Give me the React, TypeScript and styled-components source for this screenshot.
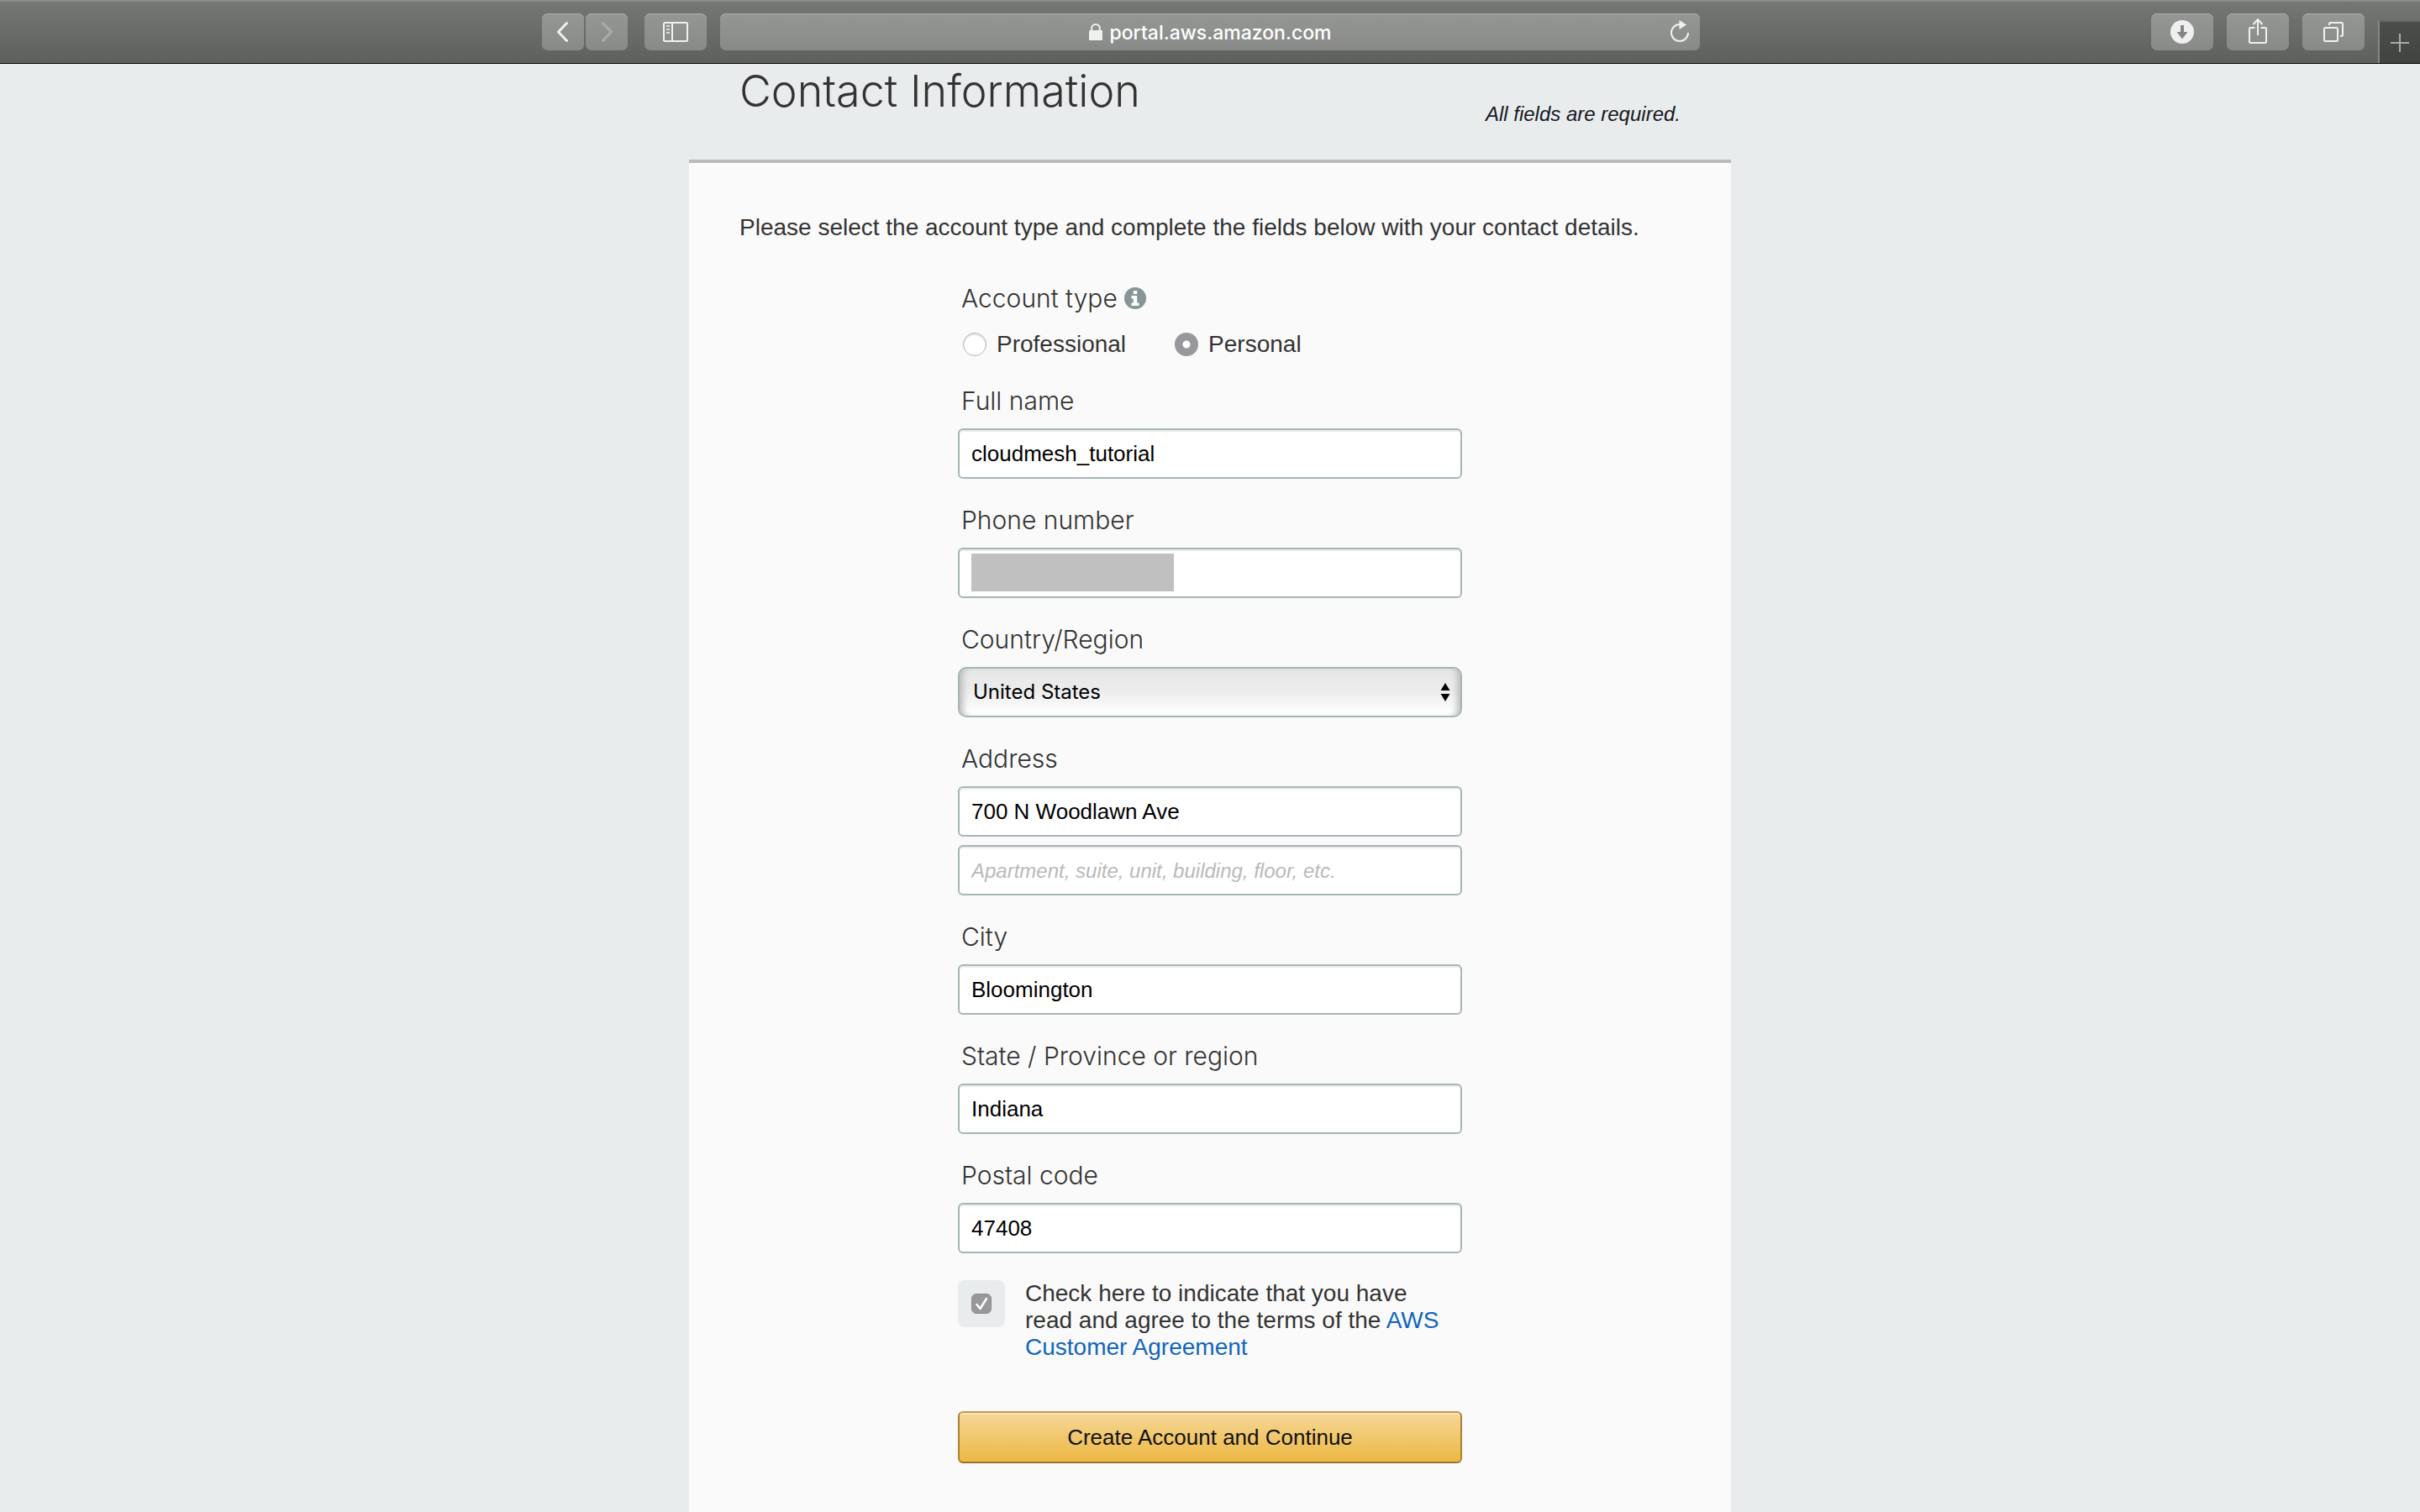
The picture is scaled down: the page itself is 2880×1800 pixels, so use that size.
import React, { useState } from 'react';
import styled, { createGlobalStyle } from 'styled-components';

const sans = `"Helvetica Neue", "Liberation Sans", Arial, sans-serif`;
const ui = `Inter, "Liberation Sans", sans-serif`;

const GlobalStyle = createGlobalStyle`
  *, *::before, *::after { box-sizing: border-box; }
  body { margin: 0; background: #e9eced; font-family: ${sans}; color: #333; }
  h1, p, fieldset { margin: 0; padding: 0; border: 0; font-weight: 400; }
  button, input, select { font: inherit; }
  svg { display: block; flex: none; }
`;

const Window = styled.div`
  min-height: 100vh;
  display: flex;
  flex-direction: column;
`;

const Toolbar = styled.header`
  height: 76px;
  display: grid;
  grid-template-columns: 1fr minmax(0, 1166px) 1fr;
  column-gap: 16px;
  background: linear-gradient(#757775, #5e605e);
  border-top: 2px solid #8b8d8b;
  border-bottom: 1px solid #000;
`;

const ToolGroup = styled.div<{ $gap: number; $start?: boolean }>`
  display: flex;
  gap: ${(p) => p.$gap}px;
  padding-top: ${(p) => (p.$start ? 14 : 0)}px;
  justify-content: flex-end;
`;

const ToolButton = styled.button<{ $wide?: boolean }>`
  width: ${(p) => (p.$wide ? 74 : 50)}px;
  height: 44px;
  padding: 0;
  display: flex;
  align-items: center;
  justify-content: center;
  border: 0;
  border-radius: 7px;
  background: linear-gradient(#959795, #888a88);
  box-shadow: inset 0 1px 0 #abadab;
  color: #f0f1f0;

  &:disabled { color: #abadab; }
`;

const NavPair = styled.div`
  display: flex;
  gap: 2px;
`;

const AddressBar = styled.div`
  height: 44px;
  margin-top: 14px;
  padding: 0 12px;
  display: grid;
  grid-template-columns: 24px 1fr 24px;
  align-items: center;
  border-radius: 7px;
  background: linear-gradient(#959795, #888a88);
  box-shadow: inset 0 1px 0 #abadab;
  color: #f0f1f0;
`;

const Url = styled.div`
  grid-column: 2;
  display: flex;
  align-items: center;
  justify-content: center;
  gap: 9px;
  font: 500 23px/32px ${ui};
  color: #fff;
`;

const UrlText = styled.span`
  padding-top: 2px;
`;

const BareButton = styled.button`
  padding: 0;
  border: 0;
  background: none;
  color: inherit;
`;

const Actions = styled.div`
  display: flex;
  gap: 16px;
  padding-top: 14px;
`;

const NewTab = styled.button`
  width: 50px;
  height: 51px;
  margin-top: 22px;
  padding: 0;
  display: flex;
  align-items: center;
  justify-content: center;
  border: 0;
  border-left: 2px solid #858785;
  border-top: 2px solid #666866;
  background: linear-gradient(#4c4e4c, #414341);
  color: #a9aba9;
`;

const Page = styled.main`
  flex: 1;
  width: 100%;
  max-width: 1240px;
  margin: 0 auto;
  display: flex;
  flex-direction: column;
`;

const PageHead = styled.div`
  height: 114px;
  padding: 0 60px 40px;
  display: flex;
  justify-content: space-between;
`;

const Title = styled.h1`
  font: 300 52px/66px ${ui};
`;

const Note = styled.p`
  align-self: flex-end;
  font-size: 24px;
  line-height: 28px;
  font-style: italic;
  color: #16191f;
`;

const Card = styled.section`
  flex: 1;
  padding: 58px 60px;
  border-top: 4px solid #b9baba;
  background: #fafafa;
`;

const Intro = styled.p`
  font-size: 28px;
  line-height: 38px;
`;

const Form = styled.form`
  max-width: 600px;
  margin: 46px auto 0;
  display: flex;
  flex-direction: column;
  gap: 30px;
`;

const Field = styled.div`
  display: flex;
  flex-direction: column;
`;

const labelText = `
  padding: 0 4px;
  font: 300 30px/38px ${ui};
`;

const Label = styled.label`
  ${labelText}
  margin-bottom: 14px;
`;

const Legend = styled.legend`
  ${labelText}
  margin-bottom: 18px;
  display: flex;
  align-items: center;
  gap: 8px;
`;

const RadioRow = styled.div`
  display: flex;
  gap: 58px;
  padding-left: 6px;
`;

const RadioLabel = styled.label`
  display: flex;
  align-items: center;
  gap: 12px;
  font-size: 28px;
  line-height: 36px;
`;

const Radio = styled.input`
  appearance: none;
  width: 28px;
  height: 28px;
  margin: 0;
  border-radius: 50%;
  border: 1px solid #b4b4b4;
  background: #fff;
  box-shadow: inset 0 2px 2px #e2e2e2;

  &:checked {
    border: 0;
    background: radial-gradient(circle, #fff 4px, #98979c 5px);
    box-shadow: none;
  }
`;

const TextInput = styled.input`
  width: 100%;
  height: 60px;
  padding: 0 14px;
  border: 2px solid #a7b5b6;
  border-radius: 6px;
  background: #fff;
  box-shadow: inset 0 2px 0 #ececec;
  font-size: 26px;
  color: #000;
  outline: none;

  &::placeholder {
    font-size: 24px;
    font-style: italic;
    color: #b9b9b9;
    opacity: 1;
  }

  & + & { margin-top: 10px; }
`;

const Overlaid = styled.div`
  position: relative;
`;

const Redaction = styled.span`
  position: absolute;
  left: 16px;
  top: 7px;
  width: 241px;
  height: 45px;
  background: #c0c0c0;
`;

const Select = styled.select`
  appearance: none;
  display: block;
  width: 100%;
  height: 60px;
  padding: 0 40px 0 16px;
  border: 2px solid #a7b5b6;
  border-radius: 10px;
  background: linear-gradient(#e6e6e6, #ededed 50%, #fff 95%);
  box-shadow: inset 9px 0 7px -5px #bdbdbd, inset -9px 0 7px -5px #bdbdbd;
  font: 400 24px/32px ${ui};
  color: #000;
`;

const SelectArrows = styled.svg`
  position: absolute;
  right: 14px;
  top: 18px;
  pointer-events: none;
`;

const Agreement = styled.div`
  margin-top: 2px;
  padding-right: 16px;
  display: flex;
  align-items: flex-start;
  gap: 24px;
`;

const CheckTile = styled.span`
  width: 56px;
  height: 56px;
  flex: none;
  display: grid;
  place-items: center;
  border-radius: 8px;
  background: #e9eced;

  & > * { grid-area: 1 / 1; }
  & > svg { pointer-events: none; }
`;

const Checkbox = styled.input`
  appearance: none;
  width: 24px;
  height: 24px;
  margin: 0;
  border: 1px solid #8b8a8f;
  border-radius: 6px;
  background: #fff;

  &:checked { background: #98979c; }
`;

const AgreementText = styled.label`
  font-size: 28px;
  line-height: 32px;
`;

const Link = styled.a`
  color: #1166bb;
  text-decoration: none;
`;

const Submit = styled.button`
  height: 62px;
  margin-top: 30px;
  padding: 0;
  border: 2px solid;
  border-color: #c29a44 #a78237 #957431;
  border-radius: 6px;
  background: linear-gradient(#f5d797, #edb843);
  box-shadow: inset 0 2px 0 #f9e6bd;
  font-size: 26px;
  color: #111;
`;

const BackIcon = () => (
  <svg width="16" height="26" viewBox="0 0 16 26" fill="none" stroke="currentColor" strokeWidth="3" strokeLinecap="round" strokeLinejoin="round">
    <path d="M12.5 2.5 2.500 13l10 10.500" />
  </svg>
);

const ForwardIcon = () => (
  <svg width="16" height="26" viewBox="0 0 16 26" fill="none" stroke="currentColor" strokeWidth="3" strokeLinecap="round" strokeLinejoin="round">
    <path d="M3.500 2.500 13.500 13 3.500 23.500" />
  </svg>
);

const SidebarIcon = () => (
  <svg width="30" height="24" viewBox="0 0 30 24" fill="none" stroke="currentColor" strokeWidth="2">
    <rect x="1" y="1" width="28" height="22" rx="1.500" />
    <path d="M11 1v22" />
    <path d="M4 5h4M4 9h4M4 13h4" opacity=".75" />
  </svg>
);

const LockIcon = () => (
  <svg width="16" height="20" viewBox="0 0 16 20">
    <path d="M3.200 9V5.500a4.800 4.500 0 0 1 9.600 0V9" fill="none" stroke="#f0f1f0" strokeWidth="2" />
    <rect y="8" width="16" height="12" rx="1" fill="#f0f1f0" />
  </svg>
);

const ReloadIcon = () => (
  <svg width="24" height="28" viewBox="0 0 24 28">
    <path d="M12 5a10 10 0 1 0 10 10" fill="none" stroke="currentColor" strokeWidth="2" />
    <path d="M11.500 0 20 5.500 11.500 11z" fill="currentColor" />
  </svg>
);

const DownloadIcon = () => (
  <svg width="28" height="28" viewBox="0 0 28 28">
    <circle cx="14" cy="14" r="14" fill="#efefef" />
    <path d="M12 6h4v8h4.500L14 22.500 7.500 14H12z" fill="#858785" />
  </svg>
);

const ShareIcon = () => (
  <svg width="22" height="32" viewBox="0 0 22 32" fill="none" stroke="currentColor" strokeWidth="2">
    <path d="M7.500 11H2.500a1.500 1.500 0 0 0-1.500 1.500v15a1.500 1.500 0 0 0 1.500 1.500h17a1.500 1.500 0 0 0 1.500-1.500v-15a1.500 1.500 0 0 0-1.500-1.500h-5" />
    <path d="M11 20V1.500M5.500 7 11 1.200l5.500 5.800" />
  </svg>
);

const TabsIcon = () => (
  <svg width="24" height="24" viewBox="0 0 24 24" fill="none" stroke="currentColor" strokeWidth="2">
    <rect x="1" y="7" width="16" height="16" rx="1.500" />
    <path d="M7 4V2.500A1.500 1.500 0 0 1 8.500 1h13A1.500 1.500 0 0 1 23 2.500v13a1.500 1.500 0 0 1-1.500 1.500H20" />
  </svg>
);

const PlusIcon = () => (
  <svg width="22" height="22" viewBox="0 0 22 22" stroke="currentColor" strokeWidth="2">
    <path d="M11 0v22M0 11h22" />
  </svg>
);

const InfoIcon = () => (
  <svg width="26" height="26" viewBox="0 0 26 26">
    <circle cx="13" cy="13" r="13" fill="#879596" />
    <path d="M10.800 4h4.400v4h-4.400zM8.500 10h6.700v8.500H17.500V22h-9v-3.500h2.300v-5H8.500z" fill="#fff" />
  </svg>
);

const CheckMark = () => (
  <svg width="24" height="24" viewBox="0 0 24 24" fill="none" stroke="#fff" strokeWidth="2.500" strokeLinecap="round" strokeLinejoin="round">
    <path d="M6.500 13l4 5 7.500-12" />
  </svg>
);

function TextField({ id, label, value }: { id: string; label: string; value: string }) {
  return (
    <Field>
      <Label htmlFor={id}>{label}</Label>
      <TextInput id={id} type="text" defaultValue={value} />
    </Field>
  );
}

export default function App() {
  const [account, setAccount] = useState('Personal');

  return (
    <>
      <GlobalStyle />
      <Window>
        <Toolbar>
          <ToolGroup $gap={20} $start>
            <NavPair>
              <ToolButton aria-label="Back"><BackIcon /></ToolButton>
              <ToolButton aria-label="Forward" disabled><ForwardIcon /></ToolButton>
            </NavPair>
            <ToolButton $wide aria-label="Sidebar"><SidebarIcon /></ToolButton>
          </ToolGroup>
          <AddressBar>
            <Url><LockIcon /><UrlText>portal.aws.amazon.com</UrlText></Url>
            <BareButton aria-label="Reload"><ReloadIcon /></BareButton>
          </AddressBar>
          <ToolGroup $gap={16}>
            <Actions>
              <ToolButton $wide aria-label="Downloads"><DownloadIcon /></ToolButton>
              <ToolButton $wide aria-label="Share"><ShareIcon /></ToolButton>
              <ToolButton $wide aria-label="Show tabs"><TabsIcon /></ToolButton>
            </Actions>
            <NewTab aria-label="New tab"><PlusIcon /></NewTab>
          </ToolGroup>
        </Toolbar>

        <Page>
          <PageHead>
            <Title>Contact Information</Title>
            <Note>All fields are required.</Note>
          </PageHead>
          <Card>
            <Intro>Please select the account type and complete the fields below with your contact details.</Intro>
            <Form onSubmit={(e) => e.preventDefault()}>
              <fieldset>
                <Legend>Account type <InfoIcon /></Legend>
                <RadioRow>
                  {['Professional', 'Personal'].map((kind) => (
                    <RadioLabel key={kind}>
                      <Radio type="radio" name="account" checked={account === kind} onChange={() => setAccount(kind)} />
                      {kind}
                    </RadioLabel>
                  ))}
                </RadioRow>
              </fieldset>
              <TextField id="name" label="Full name" value="cloudmesh_tutorial" />
              <Field>
                <Label htmlFor="phone">Phone number</Label>
                <Overlaid>
                  <TextInput id="phone" type="tel" />
                  <Redaction />
                </Overlaid>
              </Field>
              <Field>
                <Label htmlFor="country">Country/Region</Label>
                <Overlaid>
                  <Select id="country" defaultValue="United States">
                    <option>United States</option>
                  </Select>
                  <SelectArrows width="12" height="24" viewBox="0 0 12 24">
                    <path d="M6 1l5.500 9H.5zM6 23l5.500-9H.5z" fill="#000" />
                  </SelectArrows>
                </Overlaid>
              </Field>
              <Field>
                <Label htmlFor="address">Address</Label>
                <TextInput id="address" type="text" defaultValue="700 N Woodlawn Ave" />
                <TextInput type="text" aria-label="Address line 2" placeholder="Apartment, suite, unit, building, floor, etc." />
              </Field>
              <TextField id="city" label="City" value="Bloomington" />
              <TextField id="state" label="State / Province or region" value="Indiana" />
              <TextField id="postal" label="Postal code" value="47408" />
              <Agreement>
                <CheckTile>
                  <Checkbox id="agree" type="checkbox" defaultChecked />
                  <CheckMark />
                </CheckTile>
                <AgreementText htmlFor="agree">
                  Check here to indicate that you have read and agree to the terms of the{' '}
                  <Link href="#agreement">AWS Customer Agreement</Link>
                </AgreementText>
              </Agreement>
              <Submit type="submit">Create Account and Continue</Submit>
            </Form>
          </Card>
        </Page>
      </Window>
    </>
  );
}
